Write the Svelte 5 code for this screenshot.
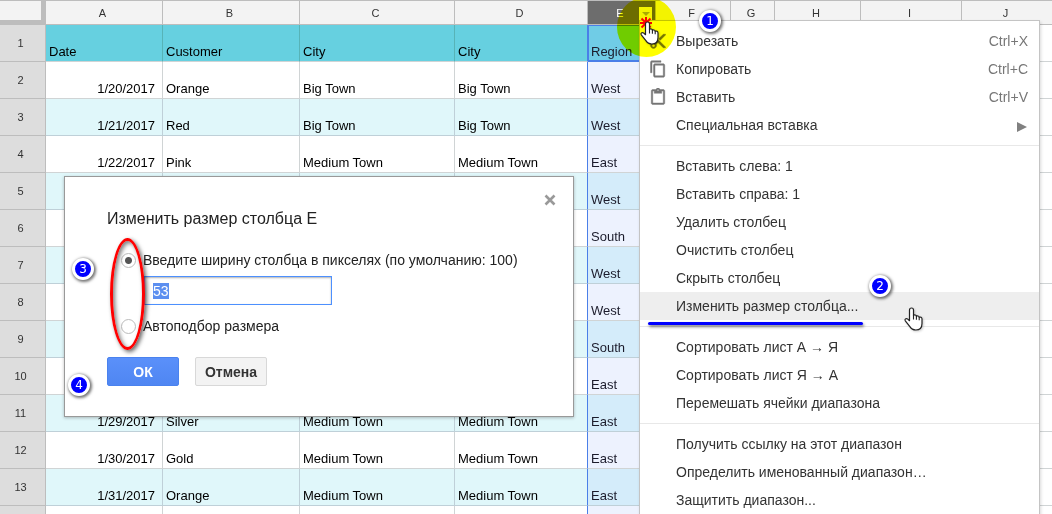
<script lang="ts">
	import { onMount } from 'svelte';

	interface Row {
		cells: string[];
		region: string;
	}

	interface MenuItem {
		label: string;
		icon?: string;
		shortcut?: string;
		submenu?: boolean;
		active?: boolean;
	}

	const columns = [
		{ name: 'A', width: 117 },
		{ name: 'B', width: 137 },
		{ name: 'C', width: 155 },
		{ name: 'D', width: 133 },
		{ name: 'E', width: 68 },
		{ name: 'F', width: 75 },
		{ name: 'G', width: 44 },
		{ name: 'H', width: 86 },
		{ name: 'I', width: 101 },
		{ name: 'J', width: 0 }
	];

	const blank = ['', '', '', ''];

	const rows: Row[] = [
		{ cells: ['Date', 'Customer', 'City', 'City'], region: 'Region' },
		{ cells: ['1/20/2017', 'Orange', 'Big Town', 'Big Town'], region: 'West' },
		{ cells: ['1/21/2017', 'Red', 'Big Town', 'Big Town'], region: 'West' },
		{ cells: ['1/22/2017', 'Pink', 'Medium Town', 'Medium Town'], region: 'East' },
		{ cells: blank, region: 'West' },
		{ cells: blank, region: 'South' },
		{ cells: blank, region: 'West' },
		{ cells: blank, region: 'West' },
		{ cells: blank, region: 'South' },
		{ cells: blank, region: 'East' },
		{ cells: ['1/29/2017', 'Silver', 'Medium Town', 'Medium Town'], region: 'East' },
		{ cells: ['1/30/2017', 'Gold', 'Medium Town', 'Medium Town'], region: 'East' },
		{ cells: ['1/31/2017', 'Orange', 'Medium Town', 'Medium Town'], region: 'East' },
		{ cells: blank, region: '' }
	];

	const icons: Record<string, string> = {
		cut: 'M9.64 7.64c.23-.5.36-1.05.36-1.64 0-2.21-1.79-4-4-4S2 3.79 2 6s1.79 4 4 4c.59 0 1.14-.13 1.64-.36L10 12l-2.36 2.36C7.14 14.13 6.59 14 6 14c-2.21 0-4 1.79-4 4s1.79 4 4 4 4-1.79 4-4c0-.59-.13-1.14-.36-1.64L12 14l7 7h3v-1L9.64 7.64zM6 8a2 2 0 1 1 0-4 2 2 0 0 1 0 4zm0 12a2 2 0 1 1 0-4 2 2 0 0 1 0 4zM19 3l-6 6 2 2 7-7V3z',
		copy: 'M16 1H4c-1.1 0-2 .9-2 2v14h2V3h12V1zm3 4H8c-1.1 0-2 .9-2 2v14c0 1.1.9 2 2 2h11c1.1 0 2-.9 2-2V7c0-1.1-.9-2-2-2zm0 16H8V7h11v14z',
		paste: 'M19 2h-4.18C14.4.84 13.3 0 12 0c-1.3 0-2.4.84-2.82 2H5c-1.1 0-2 .9-2 2v16c0 1.1.9 2 2 2h14c1.1 0 2-.9 2-2V4c0-1.1-.9-2-2-2zm-7 0c.55 0 1 .45 1 1s-.45 1-1 1-1-.45-1-1 .45-1 1-1zm7 18H5V4h2v3h10V4h2v16z'
	};

	const menu: MenuItem[][] = [
		[
			{ label: 'Вырезать', icon: 'cut', shortcut: 'Ctrl+X' },
			{ label: 'Копировать', icon: 'copy', shortcut: 'Ctrl+C' },
			{ label: 'Вставить', icon: 'paste', shortcut: 'Ctrl+V' },
			{ label: 'Специальная вставка', submenu: true }
		],
		[
			{ label: 'Вставить слева: 1' },
			{ label: 'Вставить справа: 1' },
			{ label: 'Удалить столбец' },
			{ label: 'Очистить столбец' },
			{ label: 'Скрыть столбец' },
			{ label: 'Изменить размер столбца...', active: true }
		],
		[
			{ label: 'Сортировать лист А → Я' },
			{ label: 'Сортировать лист Я → А' },
			{ label: 'Перемешать ячейки диапазона' }
		],
		[
			{ label: 'Получить ссылку на этот диапазон' },
			{ label: 'Определить именованный диапазон…' },
			{ label: 'Защитить диапазон...' }
		]
	];

	const steps = [
		{ n: 1, x: 710, y: 21 },
		{ n: 2, x: 880, y: 286 },
		{ n: 3, x: 83, y: 269 },
		{ n: 4, x: 79, y: 385 }
	];

	let mode = $state('manual');
	let size = $state('53');
	let sizeInput: HTMLInputElement;

	onMount(() => {
		sizeInput.focus();
		sizeInput.select();
	});
</script>

{#snippet hand()}
	<svg viewBox="0 0 19 24" aria-hidden="true">
		<path
			d="M7.5 1C8.8 1 9.5 1.9 9.5 3V8.4C10.4 7.6 12.2 7.9 12.4 9.2 13.4 8.5 15 8.9 15.2 10.2 16.6 9.7 18 10.5 18 12V16.5C18 20.6 15.6 23 11.8 23 8.5 23 7.2 21.8 5.7 19.4L1.3 13.8C.4 12.3 2 10.9 3.5 11.9L5.5 13.7V3C5.5 1.9 6.2 1 7.5 1Z"
			fill="#fff"
			stroke="#222"
			stroke-width="1.2"
			stroke-linejoin="round"
		/>
		<path d="M9.5 8V12.5M12.4 9V12.8M15.2 10V13.2" fill="none" stroke="#222" stroke-width="1.1" />
	</svg>
{/snippet}

<div class="app">
	<table class="sheet">
		<colgroup>
			<col style:width="46px" />
			{#each columns as col}
				<col style:width={col.width ? `${col.width}px` : 'auto'} />
			{/each}
		</colgroup>
		<thead>
			<tr>
				<td class="corner"></td>
				{#each columns as col}
					<th scope="col" class:selected={col.name === 'E'}>{col.name}</th>
				{/each}
			</tr>
		</thead>
		<tbody>
			{#each rows as row, i}
				<tr class:title={i === 0} class:band={i > 0 && i % 2 === 0}>
					<th scope="row">{i < 13 ? i + 1 : ''}</th>
					{#each row.cells as cell, c}
						<td class="data" class:date={c === 0 && i > 0} class:edge={c === 3}>{cell}</td>
					{/each}
					<td class="data region" class:focused={i === 0}>{row.region}</td>
					{#each columns.slice(5) as _}
						<td></td>
					{/each}
				</tr>
			{/each}
		</tbody>
	</table>

	<button class="col-menu" aria-label="E"></button>

	<div class="menu" role="menu">
		{#each menu as group}
			<div class="group">
				{#each group as item}
					<button class="item" class:active={item.active} role="menuitem">
						<span class="icon">
							{#if item.icon}
								<svg width="18" height="18" viewBox="0 0 24 24"><path d={icons[item.icon]} /></svg>
							{/if}
						</span>
						<span class="label">{item.label}</span>
						{#if item.shortcut}<span class="shortcut">{item.shortcut}</span>{/if}
						{#if item.submenu}<span class="arrow"></span>{/if}
					</button>
				{/each}
			</div>
		{/each}
	</div>

	<form class="dialog" aria-labelledby="dialog-title">
		<button type="button" class="close" aria-label="×">
			<svg width="12" height="12" viewBox="0 0 12 12"><path d="M1.5 1.5l9 9M10.5 1.5l-9 9" /></svg>
		</button>
		<h2 id="dialog-title">Изменить размер столбца E</h2>
		<label class="option">
			<input type="radio" name="mode" value="manual" bind:group={mode} />
			<span id="width-label">Введите ширину столбца в пикселях (по умолчанию: 100)</span>
		</label>
		<input
			class="size"
			type="text"
			aria-labelledby="width-label"
			bind:value={size}
			bind:this={sizeInput}
		/>
		<label class="option">
			<input type="radio" name="mode" value="auto" bind:group={mode} />
			<span>Автоподбор размера</span>
		</label>
		<div class="actions">
			<button type="button" class="btn primary">ОК</button>
			<button type="button" class="btn">Отмена</button>
		</div>
	</form>

	<!-- tutorial annotations -->
	<div class="spot"></div>
	<svg class="burst" viewBox="0 0 12 12" aria-hidden="true">
		<path d="M6 0v12M0 6h12M1.5 1.5l9 9M10.5 1.5l-9 9" />
	</svg>
	<div class="cursor first">{@render hand()}</div>
	<div class="cursor second">{@render hand()}</div>
	<div class="ring"></div>
	<div class="underline"></div>
	{#each steps as step}
		<span class="step" style:left="{step.x}px" style:top="{step.y}px">{step.n}</span>
	{/each}
</div>

<style>
	:global(body) {
		margin: 0;
		background: #fff;
	}

	.app {
		position: relative;
		height: 100vh;
		overflow: hidden;
		font-family: 'Liberation Sans', Arial, sans-serif;
		font-size: 14px;
		background: #fff;
	}

	button,
	input {
		font: inherit;
	}

	button {
		padding: 0;
		border: 0;
		background: none;
	}

	.sheet {
		width: 100%;
		table-layout: fixed;
		border-collapse: separate;
		border-spacing: 0;
		border-top: 1px solid #bdbdbd;
	}

	.sheet th,
	.sheet td {
		box-sizing: border-box;
		height: 37px;
		padding: 0;
		border-right: 1px solid #d0d4d5;
		border-bottom: 1px solid #d0d4d5;
	}

	.sheet th {
		font-size: 11px;
		font-weight: 400;
		color: #333;
		background: #f3f3f3;
		border-color: #bdbdbd;
	}

	.sheet thead th,
	.sheet thead td {
		height: 24px;
	}

	.sheet thead th {
		padding-right: 3px;
	}

	.sheet tbody th {
		padding-right: 4px;
		background: #ddd;
	}

	.sheet th:last-child,
	.sheet td:last-child {
		border-right: 0;
	}

	.sheet .corner {
		background: #f3f3f3;
		border-right: 5px solid #bdbdbd;
		border-bottom: 5px solid #bdbdbd;
	}

	.sheet th.selected {
		color: #fff;
		background: #6d6d6d;
	}

	.sheet .data {
		padding: 0 7px 1px 3px;
		font-size: 13px;
		line-height: 16px;
		color: #000;
		vertical-align: bottom;
		white-space: nowrap;
	}

	.sheet .date {
		text-align: right;
	}

	.sheet .band .data {
		background: #e0f7fa;
		border-color: #bfd0d8;
	}

	.sheet .title .data {
		background: #66d0e0;
		border-right-color: #57b3b7;
	}

	.sheet tr .data.edge {
		border-right-color: #4a7fe8;
	}

	.sheet .data.region {
		color: #1b1b2b;
		background: #edf2fe;
	}

	.sheet .band .data.region {
		background: #d4ecfa;
	}

	.sheet .title .data.region {
		background: #70cce6;
	}

	.sheet .data.focused {
		border-bottom-color: #4a7fe8;
		box-shadow: inset 1px 1px #4a7fe8, inset 0 -1px #4a7fe8;
	}

	.col-menu {
		position: absolute;
		left: 639px;
		top: 7px;
		width: 13px;
		height: 13px;
		background: #f3f3f3;
	}

	.col-menu::after {
		content: '';
		position: absolute;
		left: 3px;
		top: 5px;
		border: 4px solid transparent;
		border-top-color: #aaa;
		border-bottom: 0;
	}

	.menu {
		position: absolute;
		left: 639px;
		top: 20px;
		box-sizing: border-box;
		width: 401px;
		border: 1px solid #c4c4c4;
		background: #fff;
		box-shadow: 1px 2px 3px rgba(0, 0, 0, 0.15);
	}

	.group {
		padding: 6px 0;
	}

	.group + .group {
		border-top: 1px solid #e8e8e8;
	}

	.item {
		display: flex;
		align-items: center;
		width: 100%;
		height: 28px;
		padding: 0 11px 0 9px;
		color: #333;
		text-align: left;
		white-space: nowrap;
	}

	.item.active {
		background: #eee;
	}

	.icon {
		display: flex;
		width: 27px;
	}

	.icon svg {
		fill: #757575;
		stroke: #757575;
		stroke-width: 0.6;
	}

	.label {
		flex: 1;
	}

	.shortcut {
		color: #777;
	}

	.arrow {
		margin: 4px 1px 0 0;
		border: 5px solid transparent;
		border-left: 10px solid #808080;
		border-right: 0;
	}

	.dialog {
		position: absolute;
		left: 64px;
		top: 176px;
		box-sizing: border-box;
		width: 510px;
		padding: 31px 42px 30px;
		border: 1px solid #999;
		background: #fff;
		box-shadow: 0 1px 3px rgba(0, 0, 0, 0.25);
		color: #222;
	}

	.close {
		position: absolute;
		top: 16px;
		right: 16px;
		width: 14px;
		height: 14px;
		line-height: 0;
	}

	.close path {
		fill: none;
		stroke: #999;
		stroke-width: 2.6;
	}

	h2 {
		margin: 0 0 20px;
		font-size: 16px;
		font-weight: 400;
		line-height: 22px;
	}

	.option {
		display: flex;
		align-items: center;
		height: 20px;
		padding-left: 14px;
		white-space: nowrap;
	}

	.option input {
		appearance: none;
		box-sizing: border-box;
		width: 15px;
		height: 15px;
		margin: 0 7px 0 0;
		border: 1px solid #bbb;
		border-radius: 50%;
		background: #fff;
	}

	.option input:checked {
		background: radial-gradient(circle, #555 3px, #fff 4px);
	}

	.size {
		display: block;
		box-sizing: border-box;
		width: 188px;
		height: 29px;
		margin: 6px 0 11px 37px;
		padding: 0 8px;
		border: 1px solid #4d90fe;
		outline: 0;
		box-shadow: inset 0 1px 2px rgba(0, 0, 0, 0.3);
		color: #333;
	}

	.size::selection {
		background: #5c8ff0;
		color: #fff;
	}

	.actions {
		display: flex;
		gap: 16px;
		margin-top: 21px;
	}

	.btn {
		box-sizing: border-box;
		width: 72px;
		height: 29px;
		border: 1px solid #d8d8d8;
		border-radius: 2px;
		background: #f3f3f3;
		color: #333;
		font-weight: 700;
	}

	.btn.primary {
		border-color: #4a82ee;
		background: linear-gradient(#5a90fa, #4f86f2);
		color: #fff;
	}

	.spot {
		position: absolute;
		left: 617px;
		top: -3px;
		width: 59px;
		height: 60px;
		border-radius: 50%;
		background: #ff0;
		mix-blend-mode: multiply;
	}

	.burst {
		position: absolute;
		left: 640px;
		top: 17px;
		width: 12px;
		height: 12px;
		stroke: #f00;
		stroke-width: 2;
	}

	.cursor {
		position: absolute;
		width: 19px;
		height: 24px;
		filter: drop-shadow(1px 1px 1px rgba(0, 0, 0, 0.2));
	}

	.cursor svg {
		display: block;
	}

	.first {
		left: 640px;
		top: 21px;
	}

	.second {
		left: 904px;
		top: 307px;
	}

	.ring {
		position: absolute;
		left: 110px;
		top: 238px;
		box-sizing: border-box;
		width: 35px;
		height: 112px;
		border: 3px solid #f00;
		border-radius: 50%;
		box-shadow: 2px 2px 4px rgba(0, 0, 0, 0.6), inset 2px 2px 4px rgba(0, 0, 0, 0.5);
	}

	.underline {
		position: absolute;
		left: 648px;
		top: 322px;
		width: 215px;
		height: 3px;
		border-radius: 2px;
		background: #00f;
		box-shadow: 1px 2px 3px rgba(0, 0, 0, 0.5);
	}

	/* left/top give the centre of the badge */
	.step {
		position: absolute;
		box-sizing: border-box;
		width: 22px;
		height: 22px;
		margin: -11px 0 0 -11px;
		border: 3px solid #fff;
		border-radius: 50%;
		background: #00f;
		box-shadow: 1px 1px 3px 1px rgba(0, 0, 0, 0.55);
		color: #fff;
		font: 12px/16px 'DejaVu Sans', sans-serif;
		text-align: center;
	}
</style>
